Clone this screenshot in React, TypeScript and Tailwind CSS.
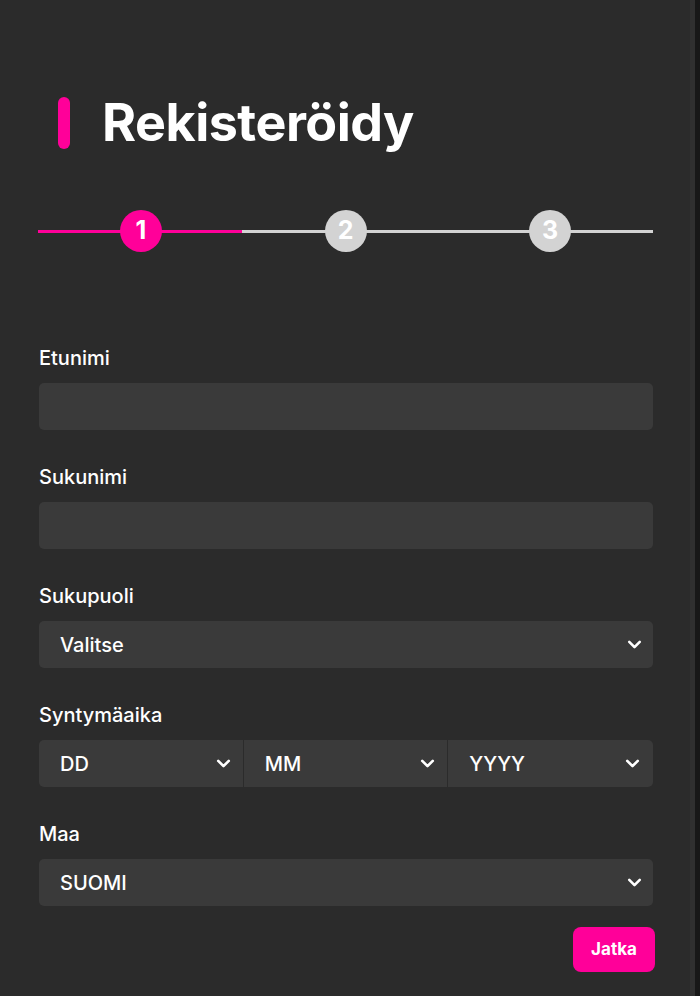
import { ChevronDown } from "lucide-react";

const FONT = { fontFamily: "Inter, 'Noto Sans', sans-serif" };

function Chevron() {
  return <ChevronDown className="h-[21px] w-[21px] text-white" strokeWidth={3} />;
}

function Field({ label, children }: { label: string; children: React.ReactNode }) {
  return (
    <div className="flex flex-col">
      <label className="mb-[12px] text-[20px] leading-[26px] font-medium text-white">{label}</label>
      {children}
    </div>
  );
}

function TextBox() {
  return <div className="h-[47px] w-full rounded-[5px] bg-[#3a3a3a]" />;
}

function SelectBox({ value }: { value: string }) {
  return (
    <div className="flex h-[47px] w-full items-center justify-between rounded-[5px] bg-[#3a3a3a] pr-[8px] pl-[21px]">
      <span className="text-[20px] font-medium text-white">{value}</span>
      <Chevron />
    </div>
  );
}

function Step({ n, active }: { n: number; active?: boolean }) {
  return (
    <div
      className={`flex h-[42px] w-[42px] items-center justify-center rounded-full text-[25px] font-bold text-white ${
        active ? "bg-[#ff0099]" : "bg-[#d3d3d3]"
      }`}
    >
      {n}
    </div>
  );
}

export default function App() {
  return (
    <div className="flex h-[996px] w-[700px] bg-[#2b2b2b]" style={FONT}>
      <div className="flex w-[690px] flex-col pt-[93px] pr-[37px] pl-[38px]">
        {/* title */}
        <div className="flex items-center">
          <div className="ml-[20px] h-[52px] w-[12px] rounded-full bg-[#ff0099]" />
          <h1 className="ml-[32px] text-[52px] leading-[60px] font-bold tracking-[-0.5px] text-white">
            Rekisteröidy
          </h1>
        </div>

        {/* stepper */}
        <div className="relative mt-[57px] flex h-[42px] items-center justify-between px-[82px]">
          <div className="absolute top-[20px] right-0 left-0 h-[3px] bg-[#d3d3d3]" />
          <div className="absolute top-[20px] left-0 h-[3px] w-[204px] bg-[#ff0099]" />
          <div className="relative">
            <Step n={1} active />
          </div>
          <div className="relative">
            <Step n={2} />
          </div>
          <div className="relative">
            <Step n={3} />
          </div>
        </div>

        {/* form */}
        <div className="mt-[93px] flex flex-col gap-[34px] pl-px">
          <Field label="Etunimi">
            <TextBox />
          </Field>
          <Field label="Sukunimi">
            <TextBox />
          </Field>
          <Field label="Sukupuoli">
            <SelectBox value="Valitse" />
          </Field>
          <Field label="Syntymäaika">
            <div className="flex h-[47px] overflow-hidden rounded-[5px] bg-[#3a3a3a] pr-px">
              {["DD", "MM", "YYYY"].map((v, i) => (
                <div
                  key={v}
                  className={`flex flex-1 items-center justify-between pr-[9px] pl-[21px] ${
                    i > 0 ? "border-l border-[#2b2b2b]" : ""
                  }`}
                >
                  <span className="text-[20px] font-medium text-white">{v}</span>
                  <Chevron />
                </div>
              ))}
            </div>
          </Field>
          <Field label="Maa">
            <SelectBox value="SUOMI" />
          </Field>
        </div>

        <div className="mt-[21px] flex justify-end">
          <button className="mr-[-2px] h-[45px] w-[82px] rounded-[8px] bg-[#ff0099] text-[17px] font-bold text-white">
            Jatka
          </button>
        </div>
      </div>
      <div className="w-[5px] bg-[#303030]" />
      <div className="w-[5px] bg-[#181818]" />
    </div>
  );
}
